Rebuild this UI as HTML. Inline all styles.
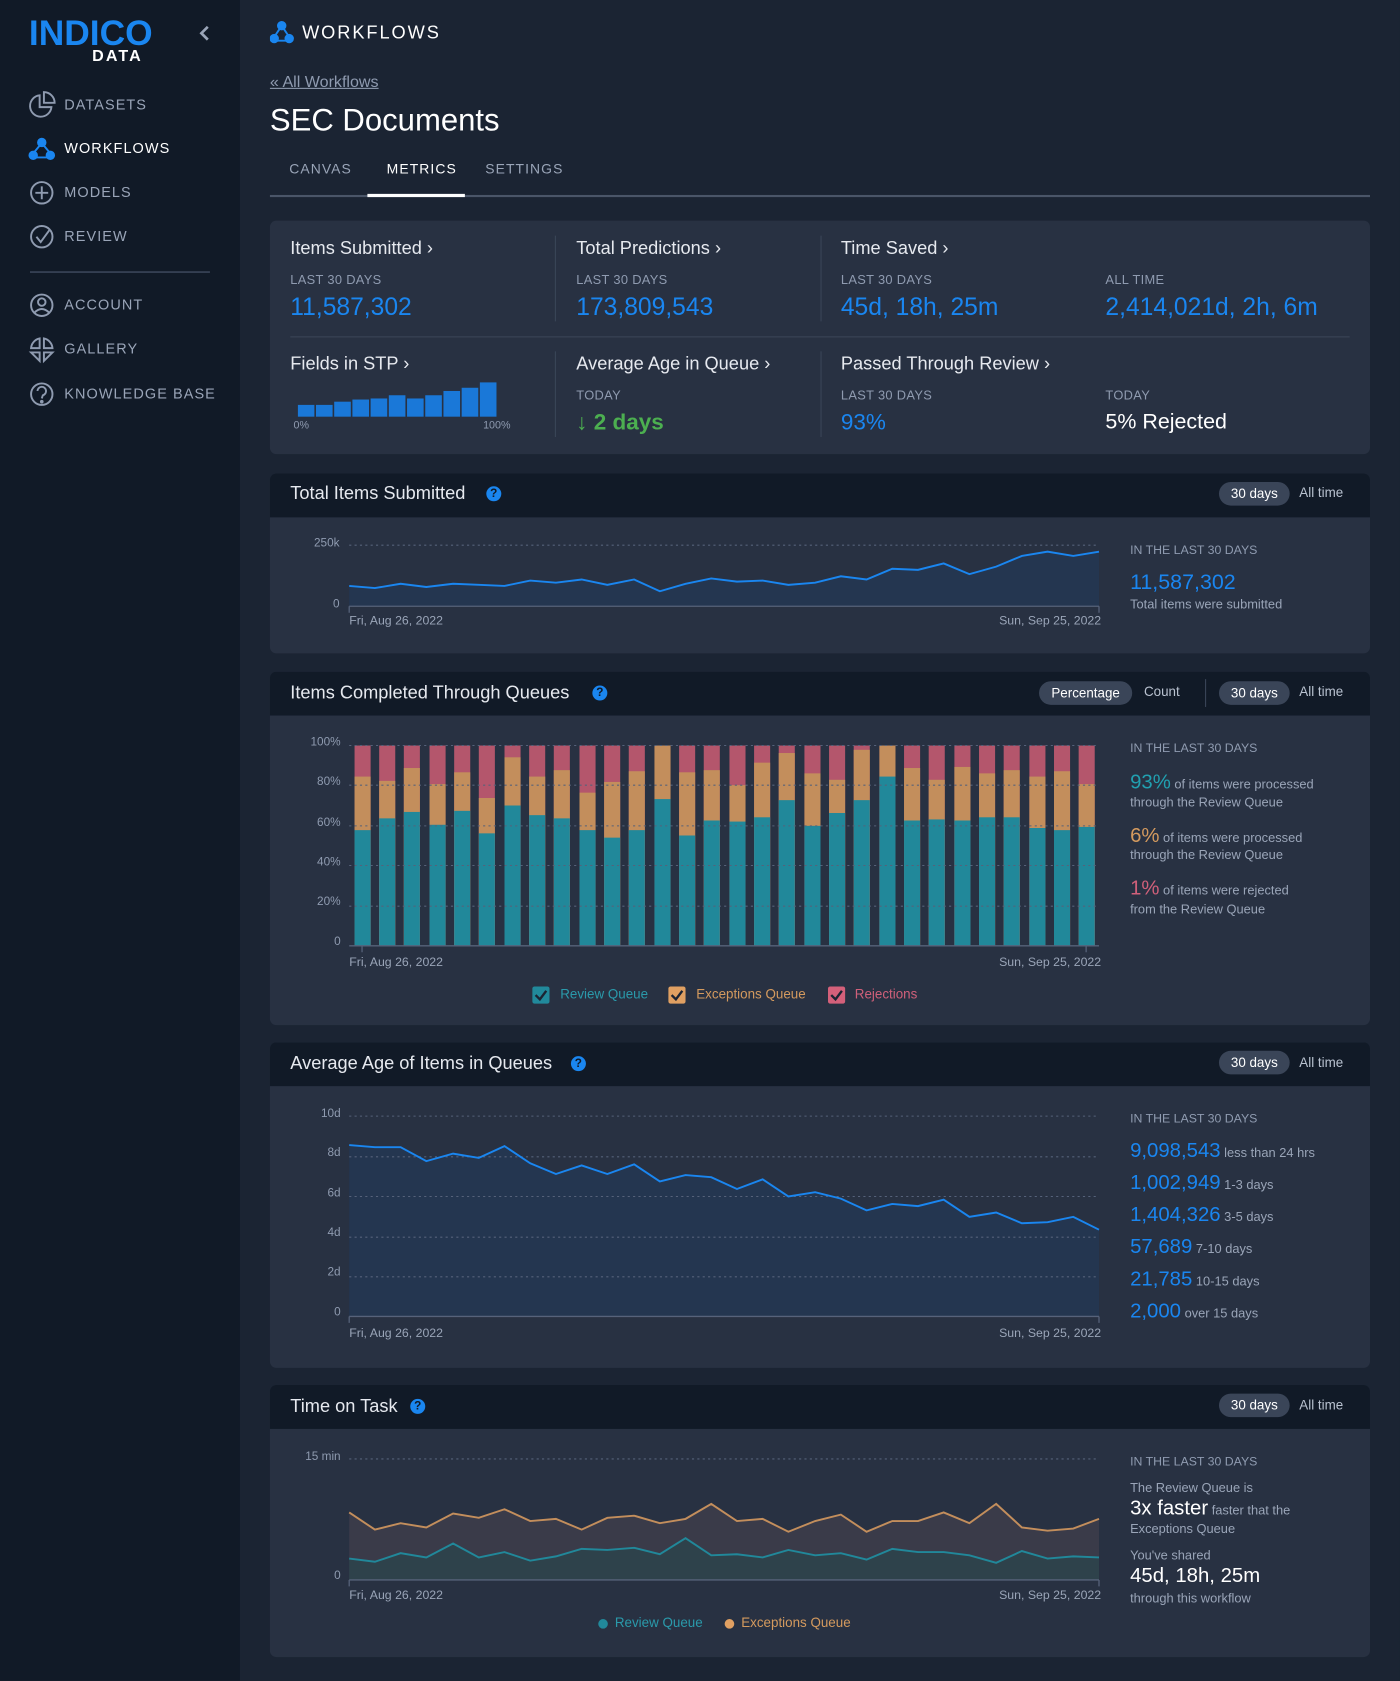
<!DOCTYPE html>
<html><head><meta charset="utf-8">
<style>
*{margin:0;padding:0;box-sizing:border-box}
html,body{width:1400px;height:1680px;overflow:hidden;background:#1b2433}
body{font-family:"Liberation Sans",sans-serif}
#w{position:absolute;left:0;top:0;width:1307px;height:1569px;transform:scale(1.07115);transform-origin:0 0;background:#1b2433}
.t{position:absolute;white-space:nowrap;line-height:1}
.side{position:absolute;left:0;top:0;width:224px;height:1569px;background:#111a27}
.nav{font-size:13.5px;letter-spacing:1px;color:#9aa5b8}
.card{position:absolute;left:252px;width:1027px;background:#283142;border-radius:6px;overflow:hidden}
.hd{position:absolute;left:0;top:0;width:100%;height:41px;background:#111a27}
.ttl{font-size:17px;color:#e6e9ef}
.lbl{font-size:12px;color:#8f9bb0;letter-spacing:.3px}
.val{font-size:23px;color:#1a86f0}
.pill{position:absolute;height:22px;border-radius:11px;background:#3a4558;color:#fff;font-size:12.5px;line-height:22px;text-align:center}
.pt{font-size:12.5px;color:#b9c2d0}
.ax{font-size:11px;color:#8f9bb0}
.dt{font-size:11.5px;color:#9aa5b8}
.sm{font-size:12px;color:#9aa5b8}
.help{position:absolute;width:14px;height:14px;border-radius:7px;background:#1a86f0;color:#111a27;font-size:11px;font-weight:bold;line-height:14px;text-align:center}
.bar{position:absolute;top:696px;width:15px;height:187px;background:#b4566c}
.bar i{position:absolute;left:0;bottom:0;width:100%;display:block}
.bar i.o{background:#c38e5c}
.bar i.c{background:#21889a}
.cb{position:absolute;width:16px;height:16px;border-radius:2px}
</style></head><body><div id="w">
<div class="side"></div>
<!-- logo -->
<div class="t" style="left:27px;top:14px;font-size:33px;font-weight:bold;color:#1a86f0;letter-spacing:0px">INDICO</div>
<div class="t" style="left:86px;top:45px;font-size:15px;font-weight:bold;color:#fff;letter-spacing:2px">DATA</div>
<svg style="position:absolute;left:184px;top:22px" width="14" height="18"><path d="M10 3 L4 9 L10 15" stroke="#9aa5b8" stroke-width="2.5" fill="none"/></svg>
<!-- nav icons -->
<svg style="position:absolute;left:0;top:0" width="224" height="400" fill="none" stroke="#8f9bb0" stroke-width="1.8">
<path d="M37 89 A10 10 0 1 0 48 100 L37 100 Z"/><path d="M41 86 L41 96 L51 96 A10 10 0 0 0 41 86Z"/>
<g stroke="#1a86f0"><circle cx="39" cy="133" r="3.5" fill="#1a86f0"/><circle cx="31" cy="145" r="3.5" fill="#1a86f0"/><circle cx="47" cy="145" r="3.5" fill="#1a86f0"/><path d="M37 136 L32 142 M41 136 L46 142 M34 147 L44 147"/></g>
<circle cx="39" cy="180" r="10"/><path d="M39 174 V186 M33 180 H45"/>
<circle cx="39" cy="221" r="10"/><path d="M34 221 L38 226 L46 215"/>
<circle cx="39" cy="285" r="10"/><circle cx="39" cy="282" r="3.5"/><path d="M32 292 Q39 285 46 292"/>
<path d="M29 325 A10 10 0 0 1 37 316 L37 325Z M41 316 A10 10 0 0 1 49 325 L41 325Z M29 329 L37 329 L37 337 Z M41 329 L49 329 L41 337Z"/>
<circle cx="39" cy="368" r="10"/><path d="M35 365 A4 4 0 1 1 40 369 L39 372"/><circle cx="39" cy="375" r=".8" fill="#8f9bb0"/>
<path d="M28 254 H196" stroke="#3a4558" stroke-width="1.5"/>
</svg>
<div class="t nav" style="left:60px;top:91px">DATASETS</div>
<div class="t nav" style="left:60px;top:132px;color:#fff">WORKFLOWS</div>
<div class="t nav" style="left:60px;top:173px">MODELS</div>
<div class="t nav" style="left:60px;top:214px">REVIEW</div>
<div class="t nav" style="left:60px;top:278px">ACCOUNT</div>
<div class="t nav" style="left:60px;top:319px">GALLERY</div>
<div class="t nav" style="left:60px;top:361px">KNOWLEDGE BASE</div>
<!-- header -->
<svg style="position:absolute;left:252px;top:19px" width="24" height="24" fill="#1a86f0" stroke="#1a86f0" stroke-width="1.8"><circle cx="11" cy="5" r="3.5"/><circle cx="4" cy="17" r="3.5"/><circle cx="18" cy="17" r="3.5"/><path d="M9 8 L5 14 M13 8 L17 14 M7 19 L15 19" fill="none"/></svg>
<div class="t" style="left:282px;top:22px;font-size:17px;color:#fff;letter-spacing:1.8px">WORKFLOWS</div>
<div class="t" style="left:252px;top:69px;font-size:15px;color:#8f9bb0;text-decoration:underline">« All Workflows</div>
<div class="t" style="left:252px;top:99px;font-size:29px;color:#fff">SEC Documents</div>
<div class="t nav" style="left:270px;top:151px;font-size:13px">CANVAS</div>
<div class="t nav" style="left:361px;top:151px;font-size:13px;color:#fff">METRICS</div>
<div class="t nav" style="left:453px;top:151px;font-size:13px">SETTINGS</div>
<div style="position:absolute;left:252px;top:182px;width:1027px;height:2px;background:#4a5568"></div>
<div style="position:absolute;left:343px;top:181px;width:91px;height:3px;background:#fff"></div>

<!-- stats card -->
<div class="card" style="top:206px;height:218px"></div>
<div class="t ttl" style="left:271px;top:223px">Items Submitted ›</div>
<div class="t lbl" style="left:271px;top:255px">LAST 30 DAYS</div>
<div class="t val" style="left:271px;top:275px">11,587,302</div>
<div class="t ttl" style="left:538px;top:223px">Total Predictions ›</div>
<div class="t lbl" style="left:538px;top:255px">LAST 30 DAYS</div>
<div class="t val" style="left:538px;top:275px">173,809,543</div>
<div class="t ttl" style="left:785px;top:223px">Time Saved ›</div>
<div class="t lbl" style="left:785px;top:255px">LAST 30 DAYS</div>
<div class="t val" style="left:785px;top:275px">45d, 18h, 25m</div>
<div class="t lbl" style="left:1032px;top:255px">ALL TIME</div>
<div class="t val" style="left:1032px;top:275px">2,414,021d, 2h, 6m</div>
<div style="position:absolute;left:271px;top:314px;width:989px;height:1px;background:#3a4558"></div>
<div style="position:absolute;left:518px;top:220px;width:1px;height:80px;background:#3a4558"></div>
<div style="position:absolute;left:766px;top:220px;width:1px;height:80px;background:#3a4558"></div>
<div style="position:absolute;left:518px;top:328px;width:1px;height:80px;background:#3a4558"></div>
<div style="position:absolute;left:766px;top:328px;width:1px;height:80px;background:#3a4558"></div>
<div class="t ttl" style="left:271px;top:331px">Fields in STP ›</div>
<div class="t ttl" style="left:538px;top:331px">Average Age in Queue ›</div>
<div class="t ttl" style="left:785px;top:331px">Passed Through Review ›</div>
<div class="t lbl" style="left:538px;top:363px">TODAY</div>
<div class="t" style="left:538px;top:384px;font-size:21px;font-weight:bold;color:#4caf50">↓ 2 days</div>
<div class="t lbl" style="left:785px;top:363px">LAST 30 DAYS</div>
<div class="t val" style="left:785px;top:384px;font-size:21px">93%</div>
<div class="t lbl" style="left:1032px;top:363px">TODAY</div>
<div class="t" style="left:1032px;top:384px;font-size:20px;color:#fff">5% Rejected</div>
<svg style="position:absolute;left:278px;top:350px" width="186" height="40" fill="#1a78d8">
<rect x="0" y="28" width="15.5" height="11"/><rect x="17" y="28" width="15.5" height="11"/><rect x="34" y="25" width="15.5" height="14"/><rect x="51" y="23" width="15.5" height="16"/><rect x="68" y="22" width="15.5" height="17"/><rect x="85" y="19" width="15.5" height="20"/><rect x="102" y="22" width="15.5" height="17"/><rect x="119" y="19" width="15.5" height="20"/><rect x="136" y="15" width="15.5" height="24"/><rect x="153" y="12" width="15.5" height="27"/><rect x="170" y="7" width="15.5" height="32"/>
</svg>
<div class="t" style="left:274px;top:393px;font-size:10px;color:#8f9bb0">0%</div>
<div class="t" style="left:451px;top:393px;font-size:10px;color:#8f9bb0">100%</div>

<!-- card 2 -->
<div class="card" style="top:442px;height:168px"><div class="hd"></div></div>
<div class="t ttl" style="left:271px;top:452px">Total Items Submitted</div>
<div class="help" style="left:454px;top:454px">?</div>
<div class="pill" style="left:1138px;top:450px;width:66px">30 days</div>
<div class="t pt" style="left:1213px;top:454px">All time</div>
<div class="t ax" style="left:280px;top:502px;width:37px;text-align:right">250k</div>
<div class="t ax" style="left:280px;top:559px;width:37px;text-align:right">0</div>
<div class="t dt" style="left:326px;top:575px">Fri, Aug 26, 2022</div>
<div class="t dt" style="left:928px;top:575px;width:100px;text-align:right">Sun, Sep 25, 2022</div>
<div class="t sm" style="left:1055px;top:509px;font-size:11.5px;color:#8f9bb0">IN THE LAST 30 DAYS</div>
<div class="t" style="left:1055px;top:534px;font-size:20px;color:#1a86f0">11,587,302</div>
<div class="t sm" style="left:1055px;top:558px">Total items were submitted</div>

<!-- card 3 -->
<div class="card" style="top:627px;height:330px"><div class="hd"></div></div>
<div class="t ttl" style="left:271px;top:638px">Items Completed Through Queues</div>
<div class="help" style="left:553px;top:640px">?</div>
<div class="pill" style="left:970px;top:636px;width:87px">Percentage</div>
<div class="t pt" style="left:1068px;top:640px">Count</div>
<div style="position:absolute;left:1125px;top:634px;width:1px;height:26px;background:#3a4558"></div>
<div class="pill" style="left:1138px;top:636px;width:66px">30 days</div>
<div class="t pt" style="left:1213px;top:640px">All time</div>
<div class="t ax" style="left:270px;top:688px;width:48px;text-align:right">100%</div>
<div class="t ax" style="left:270px;top:725px;width:48px;text-align:right">80%</div>
<div class="t ax" style="left:270px;top:763px;width:48px;text-align:right">60%</div>
<div class="t ax" style="left:270px;top:800px;width:48px;text-align:right">40%</div>
<div class="t ax" style="left:270px;top:837px;width:48px;text-align:right">20%</div>
<div class="t ax" style="left:270px;top:874px;width:48px;text-align:right">0</div>
<div class="t dt" style="left:326px;top:894px">Fri, Aug 26, 2022</div>
<div class="t dt" style="left:928px;top:894px;width:100px;text-align:right">Sun, Sep 25, 2022</div>
<div class="bar" style="left:330.5px"><i class="o" style="height:84.5%"></i><i class="c" style="height:58%"></i></div>
<div class="bar" style="left:353.8px"><i class="o" style="height:82.5%"></i><i class="c" style="height:63.5%"></i></div>
<div class="bar" style="left:377.2px"><i class="o" style="height:89%"></i><i class="c" style="height:67%"></i></div>
<div class="bar" style="left:400.5px"><i class="o" style="height:81%"></i><i class="c" style="height:60.5%"></i></div>
<div class="bar" style="left:423.9px"><i class="o" style="height:86.5%"></i><i class="c" style="height:67.5%"></i></div>
<div class="bar" style="left:447.2px"><i class="o" style="height:74%"></i><i class="c" style="height:56%"></i></div>
<div class="bar" style="left:470.5px"><i class="o" style="height:94%"></i><i class="c" style="height:70%"></i></div>
<div class="bar" style="left:493.9px"><i class="o" style="height:84.5%"></i><i class="c" style="height:65%"></i></div>
<div class="bar" style="left:517.2px"><i class="o" style="height:87.5%"></i><i class="c" style="height:63.5%"></i></div>
<div class="bar" style="left:540.6px"><i class="o" style="height:76.5%"></i><i class="c" style="height:58%"></i></div>
<div class="bar" style="left:563.9px"><i class="o" style="height:82%"></i><i class="c" style="height:54%"></i></div>
<div class="bar" style="left:587.2px"><i class="o" style="height:87%"></i><i class="c" style="height:58%"></i></div>
<div class="bar" style="left:610.6px"><i class="o" style="height:100%"></i><i class="c" style="height:73.5%"></i></div>
<div class="bar" style="left:633.9px"><i class="o" style="height:86.5%"></i><i class="c" style="height:55%"></i></div>
<div class="bar" style="left:657.3px"><i class="o" style="height:87.5%"></i><i class="c" style="height:62.5%"></i></div>
<div class="bar" style="left:680.6px"><i class="o" style="height:80%"></i><i class="c" style="height:62%"></i></div>
<div class="bar" style="left:703.9px"><i class="o" style="height:91.5%"></i><i class="c" style="height:64%"></i></div>
<div class="bar" style="left:727.3px"><i class="o" style="height:96.5%"></i><i class="c" style="height:72.5%"></i></div>
<div class="bar" style="left:750.6px"><i class="o" style="height:86%"></i><i class="c" style="height:60%"></i></div>
<div class="bar" style="left:774px"><i class="o" style="height:83%"></i><i class="c" style="height:66.5%"></i></div>
<div class="bar" style="left:797.3px"><i class="o" style="height:98%"></i><i class="c" style="height:73%"></i></div>
<div class="bar" style="left:820.6px"><i class="o" style="height:100%"></i><i class="c" style="height:84.5%"></i></div>
<div class="bar" style="left:844px"><i class="o" style="height:89%"></i><i class="c" style="height:62.5%"></i></div>
<div class="bar" style="left:867.3px"><i class="o" style="height:83%"></i><i class="c" style="height:63%"></i></div>
<div class="bar" style="left:890.7px"><i class="o" style="height:89.5%"></i><i class="c" style="height:62.5%"></i></div>
<div class="bar" style="left:914px"><i class="o" style="height:86%"></i><i class="c" style="height:64%"></i></div>
<div class="bar" style="left:937.3px"><i class="o" style="height:87.5%"></i><i class="c" style="height:64%"></i></div>
<div class="bar" style="left:960.7px"><i class="o" style="height:84.5%"></i><i class="c" style="height:59%"></i></div>
<div class="bar" style="left:984px"><i class="o" style="height:87%"></i><i class="c" style="height:58%"></i></div>
<div class="bar" style="left:1007.4px"><i class="o" style="height:80.5%"></i><i class="c" style="height:59.5%"></i></div>
<div class="cb" style="left:497px;top:921px;background:#21899b"></div>
<div class="cb" style="left:624px;top:921px;background:#e0a062"></div>
<div class="cb" style="left:773px;top:921px;background:#d4607a"></div>
<div class="t" style="left:523px;top:922px;font-size:12.5px;color:#2a9aab">Review Queue</div>
<div class="t" style="left:650px;top:922px;font-size:12.5px;color:#d49a5e">Exceptions Queue</div>
<div class="t" style="left:798px;top:922px;font-size:12.5px;color:#d0607a">Rejections</div>
<div class="t sm" style="left:1055px;top:694px;font-size:11.5px;color:#8f9bb0">IN THE LAST 30 DAYS</div>
<div class="t sm" style="left:1055px;top:721px"><span style="font-size:19px;color:#21a0b0">93%</span> of items were processed</div>
<div class="t sm" style="left:1055px;top:743px">through the Review Queue</div>
<div class="t sm" style="left:1055px;top:771px"><span style="font-size:19px;color:#d49a5e">6%</span> of items were processed</div>
<div class="t sm" style="left:1055px;top:792px">through the Review Queue</div>
<div class="t sm" style="left:1055px;top:820px"><span style="font-size:19px;color:#d0607a">1%</span> of items were rejected</div>
<div class="t sm" style="left:1055px;top:843px">from the Review Queue</div>

<!-- card 4 -->
<div class="card" style="top:973px;height:304px"><div class="hd"></div></div>
<div class="t ttl" style="left:271px;top:984px">Average Age of Items in Queues</div>
<div class="help" style="left:533px;top:986px">?</div>
<div class="pill" style="left:1138px;top:981px;width:66px">30 days</div>
<div class="t pt" style="left:1213px;top:986px">All time</div>
<div class="t ax" style="left:270px;top:1035px;width:48px;text-align:right">10d</div>
<div class="t ax" style="left:270px;top:1071px;width:48px;text-align:right">8d</div>
<div class="t ax" style="left:270px;top:1109px;width:48px;text-align:right">6d</div>
<div class="t ax" style="left:270px;top:1146px;width:48px;text-align:right">4d</div>
<div class="t ax" style="left:270px;top:1183px;width:48px;text-align:right">2d</div>
<div class="t ax" style="left:270px;top:1220px;width:48px;text-align:right">0</div>
<div class="t dt" style="left:326px;top:1240px">Fri, Aug 26, 2022</div>
<div class="t dt" style="left:928px;top:1240px;width:100px;text-align:right">Sun, Sep 25, 2022</div>
<div class="t sm" style="left:1055px;top:1040px;font-size:11.5px;color:#8f9bb0">IN THE LAST 30 DAYS</div>
<div class="t sm" style="left:1055px;top:1065px"><span style="font-size:19px;color:#1a86f0">9,098,543</span> less than 24 hrs</div>
<div class="t sm" style="left:1055px;top:1095px"><span style="font-size:19px;color:#1a86f0">1,002,949</span> 1-3 days</div>
<div class="t sm" style="left:1055px;top:1125px"><span style="font-size:19px;color:#1a86f0">1,404,326</span> 3-5 days</div>
<div class="t sm" style="left:1055px;top:1155px"><span style="font-size:19px;color:#1a86f0">57,689</span> 7-10 days</div>
<div class="t sm" style="left:1055px;top:1185px"><span style="font-size:19px;color:#1a86f0">21,785</span> 10-15 days</div>
<div class="t sm" style="left:1055px;top:1215px"><span style="font-size:19px;color:#1a86f0">2,000</span> over 15 days</div>

<!-- card 5 -->
<div class="card" style="top:1293px;height:254px"><div class="hd"></div></div>
<div class="t ttl" style="left:271px;top:1304px">Time on Task</div>
<div class="help" style="left:383px;top:1306px">?</div>
<div class="pill" style="left:1138px;top:1301px;width:66px">30 days</div>
<div class="t pt" style="left:1213px;top:1306px">All time</div>
<div class="t ax" style="left:260px;top:1355px;width:58px;text-align:right">15 min</div>
<div class="t ax" style="left:260px;top:1466px;width:58px;text-align:right">0</div>
<div class="t dt" style="left:326px;top:1485px">Fri, Aug 26, 2022</div>
<div class="t dt" style="left:928px;top:1485px;width:100px;text-align:right">Sun, Sep 25, 2022</div>
<div class="t" style="left:574px;top:1509px;font-size:12.5px;color:#2a9aab">Review Queue</div>
<div class="t" style="left:692px;top:1509px;font-size:12.5px;color:#d49a5e">Exceptions Queue</div>
<div class="t sm" style="left:1055px;top:1360px;font-size:11.5px;color:#8f9bb0">IN THE LAST 30 DAYS</div>
<div class="t sm" style="left:1055px;top:1383px">The Review Queue is</div>
<div class="t sm" style="left:1055px;top:1399px"><span style="font-size:19px;color:#fff">3x faster</span> faster that the</div>
<div class="t sm" style="left:1055px;top:1421px">Exceptions Queue</div>
<div class="t sm" style="left:1055px;top:1446px">You've shared</div>
<div class="t" style="left:1055px;top:1462px;font-size:19px;color:#fff">45d, 18h, 25m</div>
<div class="t sm" style="left:1055px;top:1486px">through this workflow</div>

<svg style="position:absolute;left:0;top:0" width="1307" height="1569" fill="none">
<g stroke="#1b2433" stroke-width="2.2"><path d="M500 929 L504 933 L510 925"/><path d="M627 929 L631 933 L637 925"/><path d="M776 929 L780 933 L786 925"/></g>
<path d="M326 547 L350 549 L374 545 L398 548 L423 545 L447 546 L471 547 L495 542 L519 544 L543 541 L567 546 L592 541 L616 552 L640 545 L664 540 L688 543 L712 542 L736 546 L761 544 L785 538 L809 541 L833 531 L857 532 L881 526 L905 536 L930 529 L954 519 L978 515 L1002 519 L1026 515 L1026 566 L326 566Z" fill="#243650"/>
<path d="M326 1069 L350 1071 L374 1071 L398 1084 L423 1077 L447 1081 L471 1070 L495 1086 L519 1096 L543 1088 L567 1096 L592 1087 L616 1103 L640 1097 L664 1099 L688 1110 L712 1101 L736 1117 L761 1113 L785 1119 L809 1130 L833 1124 L857 1126 L881 1120 L905 1136 L930 1132 L954 1142 L978 1141 L1002 1136 L1026 1148 L1026 1229 L326 1229Z" fill="#243650"/>
<path d="M326 1412 L350 1428 L374 1422 L398 1426 L423 1413 L447 1417 L471 1409 L495 1420 L519 1418 L543 1428 L567 1417 L592 1415 L616 1422 L640 1418 L664 1404 L688 1420 L712 1418 L736 1430 L761 1420 L785 1414 L809 1430 L833 1420 L857 1420 L881 1412 L905 1422 L930 1404 L954 1426 L978 1429 L1002 1427 L1026 1418 L1026 1475 L326 1475Z" fill="#3a3b49"/>
<path d="M326 1455 L350 1458 L374 1450 L398 1454 L423 1441 L447 1454 L471 1449 L495 1457 L519 1453 L543 1446 L567 1447 L592 1445 L616 1451 L640 1436 L664 1452 L688 1451 L712 1454 L736 1447 L761 1452 L785 1450 L809 1456 L833 1446 L857 1449 L881 1449 L905 1452 L930 1459 L954 1448 L978 1455 L1002 1453 L1026 1454 L1026 1475 L326 1475Z" fill="#2e424b"/>
<g stroke="#56627a" stroke-width="1" stroke-dasharray="2 3">
<path d="M326 509 H1026"/>
<path d="M326 696 H1026 M326 733 H1026 M326 771 H1026 M326 808 H1026 M326 846 H1026"/>
<path d="M326 1042 H1026 M326 1080 H1026 M326 1117 H1026 M326 1155 H1026 M326 1192 H1026"/>
<path d="M326 1362 H1026"/>
</g>
<path d="M326 547 L350 549 L374 545 L398 548 L423 545 L447 546 L471 547 L495 542 L519 544 L543 541 L567 546 L592 541 L616 552 L640 545 L664 540 L688 543 L712 542 L736 546 L761 544 L785 538 L809 541 L833 531 L857 532 L881 526 L905 536 L930 529 L954 519 L978 515 L1002 519 L1026 515" stroke="#1a86f0" stroke-width="1.8"/>
<path d="M326 1069 L350 1071 L374 1071 L398 1084 L423 1077 L447 1081 L471 1070 L495 1086 L519 1096 L543 1088 L567 1096 L592 1087 L616 1103 L640 1097 L664 1099 L688 1110 L712 1101 L736 1117 L761 1113 L785 1119 L809 1130 L833 1124 L857 1126 L881 1120 L905 1136 L930 1132 L954 1142 L978 1141 L1002 1136 L1026 1148" stroke="#1a86f0" stroke-width="1.8"/>
<path d="M326 1412 L350 1428 L374 1422 L398 1426 L423 1413 L447 1417 L471 1409 L495 1420 L519 1418 L543 1428 L567 1417 L592 1415 L616 1422 L640 1418 L664 1404 L688 1420 L712 1418 L736 1430 L761 1420 L785 1414 L809 1430 L833 1420 L857 1420 L881 1412 L905 1422 L930 1404 L954 1426 L978 1429 L1002 1427 L1026 1418" stroke="#c38e5c" stroke-width="1.8"/>
<path d="M326 1455 L350 1458 L374 1450 L398 1454 L423 1441 L447 1454 L471 1449 L495 1457 L519 1453 L543 1446 L567 1447 L592 1445 L616 1451 L640 1436 L664 1452 L688 1451 L712 1454 L736 1447 L761 1452 L785 1450 L809 1456 L833 1446 L857 1449 L881 1449 L905 1452 L930 1459 L954 1448 L978 1455 L1002 1453 L1026 1454" stroke="#21889a" stroke-width="1.8"/>
<g stroke="#56627a" stroke-width="1.2">
<path d="M326 566 H1026 M326 566 V572 M1026 566 V572"/>
<path d="M326 883 H1026 M338 883 V889 M1014 883 V889"/>
<path d="M326 1229 H1026 M326 1229 V1235 M1026 1229 V1235"/>
<path d="M326 1475 H1026 M326 1475 V1481 M1026 1475 V1481"/>
</g>
<circle cx="563" cy="1516" r="4.5" fill="#21899b"/><circle cx="681" cy="1516" r="4.5" fill="#e0a062"/>
</svg>
</div></body></html>
